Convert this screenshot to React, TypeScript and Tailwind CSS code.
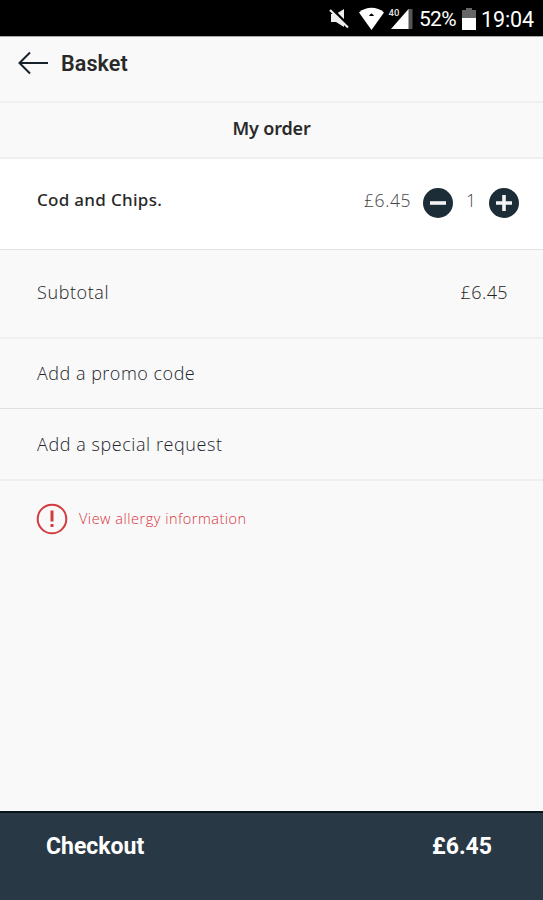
import type { ReactNode } from 'react';

function StatusBar() {
  return (
    <div className="flex h-9 shrink-0 items-start bg-black text-white">
      <svg className="h-9 w-[414px] shrink-0" viewBox="0 0 414 36" fill="none">
        <path d="M331 14h5l8-5v18l-8-5h-5z" fill="#eee" />
        <path d="M331 8l18 18" stroke="#000" strokeWidth="2.5" />
        <path d="M330 10l18 17.500" stroke="#eee" strokeWidth="2.200" />
        <path d="M359 12.5C366 6.300 377 6.300 384 12.5L371.500 30z" fill="#fff" />
        <path d="M369 16q2.500-5 5 0z" fill="#000" />
        <path d="M408 9h4.500v20H408z" fill="#555" />
        <path d="M408.500 9v20H391z" fill="#fff" />
        <text x="388.500" y="16" fill="#ddd" fontSize="9.500" fontWeight="600" fontFamily="Roboto, sans-serif">40</text>
      </svg>
      <span className="mt-[6px] ml-[5px] w-[42px] text-[21px] leading-[27px] tracking-[-0.7px]">52%</span>
      <svg className="h-9 w-4 shrink-0" viewBox="0 0 16 36">
        <path d="M5 8h6v2h4v9H1v-9h4z" fill="#666" />
        <path d="M1 18h14v12H1z" fill="#fff" />
      </svg>
      <span className="mt-[6px] ml-[4px] text-[21.500px] leading-[27px] tracking-[-0.1px]">19:04</span>
    </div>
  );
}

function RoundButton({ label, children }: { label: string; children: ReactNode }) {
  return (
    <button aria-label={label} className="size-[30px] shrink-0 rounded-full bg-[#1d2d38]">
      <svg viewBox="0 0 30 30" fill="none" stroke="#f4f4f4" strokeWidth="3.6">
        {children}
      </svg>
    </button>
  );
}

const light = "font-['Open_Sans','Noto_Sans',sans-serif]";

export default function App() {
  return (
    <div className="flex h-[900px] w-[543px] flex-col overflow-hidden bg-[#f9f9f9] font-[Roboto,sans-serif]">
      <StatusBar />
      <header className="flex h-[67px] shrink-0 border-t border-b-2 border-t-[#aaa] border-b-[#efefef] pl-[18px]">
        <svg className="mt-[13px] h-[26px] w-[31px]" viewBox="0 0 31 26" fill="none" stroke="#17212c" strokeWidth="2">
          <path d="M30 13H2M12 2.500L1.500 13 12 23.500" />
        </svg>
        <h1 className="mt-[13px] ml-3 text-[21.500px] leading-[28px] font-semibold tracking-[0.1px] text-[#292929]">Basket</h1>
      </header>
      <div className="h-[56px] shrink-0 border-b-2 border-[#efefef] pt-[12px] text-center font-['Noto_Sans',sans-serif] text-[18px] leading-[26px] font-semibold tracking-[-0.15px] text-[#292929]">My order</div>
      <div className="flex h-[91px] shrink-0 border-b border-[#e2e2e2] bg-white pl-[37px]">
        <span className="mt-[28px] w-[327px] font-['Noto_Sans',sans-serif] text-[17px] leading-[26px] font-medium tracking-[0.3px] text-[#292929]">Cod and Chips.</span>
        <span className={`${light} mt-[28px] w-[59px] text-[17.500px] leading-[26px] font-light tracking-[0.6px] text-[#444]`}>£6.45</span>
        <div className="mt-[29px] flex">
          <RoundButton label="Remove one"><path d="M7 15h16" /></RoundButton>
          <span className={`${light} -mt-px w-9 text-center text-[17.500px] leading-[26px] font-light text-[#444]`}>1</span>
          <RoundButton label="Add one"><path d="M7 15h16M15 7v16" /></RoundButton>
        </div>
      </div>
      <div className={`${light} flex h-[89px] shrink-0 justify-between border-b-2 border-[#efefef] pt-[29px] pr-[35px] pl-[37px] text-[18px] leading-[26px] font-light text-[#222]`}>
        <span className="tracking-[0.6px]">Subtotal</span>
        <span className="tracking-[0.4px]">£6.45</span>
      </div>
      <div className={`${light} h-[70px] shrink-0 border-b border-[#dfdfdf] pt-[21px] pl-[37px] text-[18px] leading-[26px] font-light tracking-[0.5px] text-[#1c252e]`}>Add a promo code</div>
      <div className={`${light} h-[72px] shrink-0 border-b-2 border-[#efefef] pt-[22px] pl-[37px] text-[18px] leading-[26px] font-light tracking-[0.57px] text-[#1c252e]`}>Add a special request</div>
      <div className="flex flex-1 pt-[22px] pl-[36px]">
        <svg className="size-8" viewBox="0 0 32 32" fill="none" stroke="#d33b3e" strokeWidth="2">
          <circle cx="16" cy="16" r="14.300" />
          <path d="M16 7.500v11M16 21v3" strokeWidth="3" />
        </svg>
        <span className={`${light} mt-[4px] ml-[11px] text-[14.500px] leading-[24px] font-light tracking-[0.5px] text-[#d8343c]`}>View allergy information</span>
      </div>
      <footer className="flex h-[89px] shrink-0 justify-between border-t-2 border-[#07151d] bg-[#293845] pt-[19px] pr-[51px] pl-[46px] text-[23px] leading-[30px] font-bold text-white">
        <span>Checkout</span>
        <span>£6.45</span>
      </footer>
    </div>
  );
}
